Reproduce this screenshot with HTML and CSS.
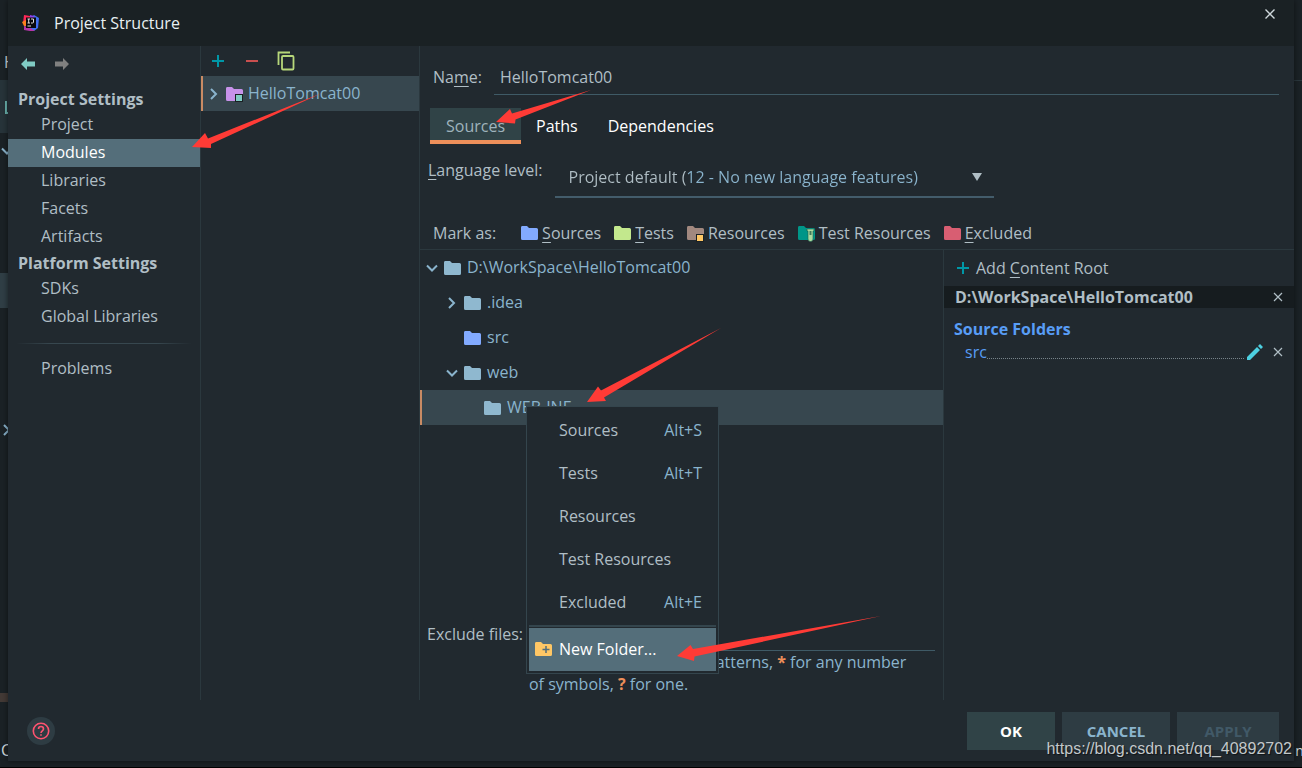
FILE: index.html
```html
<!DOCTYPE html>
<html lang="en">
<head>
<meta charset="utf-8">
<title>Project Structure</title>
<link rel="stylesheet" href="styles.css">
</head>
<body>
<svg class="defs" aria-hidden="true">
  <symbol id="folder" viewBox="0 0 18 16"><path d="M2 1h5l2 2h7.500q1.500 0 1.500 1.500v9q0 1.500-1.500 1.500h-14q-1.500 0-1.500-1.500v-11q0-1.500 1-1.500z" fill="currentColor"/></symbol>
  <symbol id="chev-right" viewBox="0 0 12 12"><path d="M3 1l5 5-5 5" fill="none" stroke="currentColor" stroke-width="2"/></symbol>
  <symbol id="chev-down" viewBox="0 0 12 12"><path d="M1 3.500l5 5 5-5" fill="none" stroke="currentColor" stroke-width="2"/></symbol>
  <symbol id="cross" viewBox="0 0 10 10"><path d="M1 1l8 8M9 1l-8 8" fill="none" stroke="currentColor" stroke-width="1.200"/></symbol>
  <symbol id="plus" viewBox="0 0 14 14"><path d="M7 1v12M1 7h12" fill="none" stroke="currentColor" stroke-width="2"/></symbol>
</svg>

<div class="backdrop" aria-hidden="true">
  <span class="peek peek-menu">H</span>
  <span class="peek peek-tab"></span>
  <span class="peek peek-mark"></span>
  <svg class="peek peek-chev-down" viewBox="0 0 12 12"><use href="#chev-down"/></svg>
  <span class="peek peek-row"></span>
  <svg class="peek peek-chev-right" viewBox="0 0 12 12"><use href="#chev-right"/></svg>
  <span class="peek peek-brown"></span>
  <span class="peek peek-status">C</span>
  <span class="peek peek-line"></span>
  <span class="peek peek-event">nic</span>
</div>

<div class="dialog" role="dialog" aria-labelledby="dialog-title">
  <header class="titlebar">
    <svg class="logo" viewBox="0 0 18 18" aria-hidden="true">
      <path d="M2 1l6 1 2 5-6 5-3-3z" fill="#fe2857"/>
      <path d="M0 8l4-2 1 6-3 0z" fill="#fc801d"/>
      <path d="M9 3l3-2 5 3-1 10-4 3-5-1z" fill="#3f6df0"/>
      <path d="M2 12l5 1 6 4-5 0-6-1z" fill="#b436a8"/>
      <path d="M8 1l4 1 1 4-5 0z" fill="#8f41e8"/>
      <path d="M4 3.500h10v10.500H4z" fill="#08080c"/>
      <path d="M5.500 5h2.500M6.700 5v4M5.500 9h2.500M9 5h2.500v3q0 1-1 1H9M5.500 12h3.500" fill="none" stroke="#ddd" stroke-width="1"/>
    </svg>
    <h1 id="dialog-title">Project Structure</h1>
    <button class="icon-btn close" aria-label="Close"><svg width="12" height="12" viewBox="0 0 12 12"><path d="M1.500 1.500l9 9M10.500 1.500l-9 9" fill="none" stroke="currentColor" stroke-width="1.400"/></svg></button>
  </header>

  <div class="body">
    <nav class="sidebar">
      <div class="history">
        <button class="icon-btn back" aria-label="Back"><svg width="14" height="12" viewBox="0 0 14 12"><path d="M0 6l6-6v3.500h8v5H6V12z" fill="currentColor"/></svg></button>
        <button class="icon-btn forward" aria-label="Forward"><svg width="14" height="12" viewBox="0 0 14 12"><path d="M14 6L8 0v3.500H0v5h8V12z" fill="currentColor"/></svg></button>
      </div>
      <h2>Project Settings</h2>
      <a href="#">Project</a>
      <a href="#" class="current" aria-current="page">Modules</a>
      <a href="#">Libraries</a>
      <a href="#">Facets</a>
      <a href="#">Artifacts</a>
      <h2>Platform Settings</h2>
      <a href="#">SDKs</a>
      <a href="#">Global Libraries</a>
      <hr>
      <a href="#">Problems</a>
    </nav>

    <section class="modules">
      <div class="toolbar">
        <button class="icon-btn add" aria-label="Add"><svg width="14" height="14"><use href="#plus"/></svg></button>
        <button class="icon-btn remove" aria-label="Remove"><svg width="14" height="14" viewBox="0 0 14 14"><path d="M1 7h12" stroke="currentColor" stroke-width="2"/></svg></button>
        <button class="icon-btn copy" aria-label="Copy"><svg width="18" height="20" viewBox="0 0 18 20"><path d="M1.500 14V1.500H13" fill="none" stroke="currentColor" stroke-width="1.800"/><rect x="5" y="5" width="11.500" height="13.500" rx="1" fill="none" stroke="currentColor" stroke-width="1.800"/></svg></button>
      </div>
      <div class="row selected module">
        <svg class="chev"><use href="#chev-right"/></svg>
        <svg class="folder violet" viewBox="0 0 18 16"><use href="#folder"/><rect x="10.500" y="8.500" width="7" height="7" fill="#80cbc4" stroke="#1a2023"/></svg>
        <span>HelloTomcat00</span>
      </div>
    </section>

    <main class="editor">
      <div class="name-row">
        <label for="name">Na<u>m</u>e:</label>
        <input id="name" type="text" value="HelloTomcat00">
      </div>
      <div class="tabs" role="tablist">
        <button role="tab" aria-selected="true">Sources</button>
        <button role="tab" aria-selected="false">Paths</button>
        <button role="tab" aria-selected="false">Dependencies</button>
      </div>
      <div class="level-row">
        <label for="level"><u>L</u>anguage level:</label>
        <div class="select-box">
          <select id="level"><option>Project default (12 - No new language features)</option></select>
          <svg width="12" height="10" viewBox="0 0 12 10" aria-hidden="true"><path d="M1 1h10L6 9z" fill="#b0bec5"/></svg>
        </div>
      </div>
      <div class="marks">
        <span class="marks-label">Mark as:</span>
        <button><svg class="folder blue"><use href="#folder"/></svg><span><u>S</u>ources</span></button>
        <button><svg class="folder green"><use href="#folder"/></svg><span><u>T</u>ests</span></button>
        <button><svg class="folder brown" viewBox="0 0 18 16"><use href="#folder"/><rect x="10.500" y="9.500" width="7" height="7" fill="#ffc765" stroke="#1a2023"/></svg><span>Resources</span></button>
        <button><svg class="folder teal" viewBox="0 0 18 16"><use href="#folder"/><path d="M10 4h7v2h-1v8q0 2.500-2.500 2.500T11 14V6h-1z" fill="#a9dca0" stroke="#19604f" stroke-width=".6"/><path d="M12.500 6h2v4h-2z" fill="#42795c"/></svg><span>Test Resources</span></button>
        <button><svg class="folder red"><use href="#folder"/></svg><span><u>E</u>xcluded</span></button>
      </div>

      <div class="split">
        <div class="left">
          <ul class="tree">
            <li class="row l1"><svg class="chev"><use href="#chev-down"/></svg><svg class="folder sky"><use href="#folder"/></svg><span>D:\WorkSpace\HelloTomcat00</span></li>
            <li class="row l2"><svg class="chev"><use href="#chev-right"/></svg><svg class="folder sky"><use href="#folder"/></svg><span>.idea</span></li>
            <li class="row l2"><span class="chev"></span><svg class="folder blue"><use href="#folder"/></svg><span>src</span></li>
            <li class="row l2"><svg class="chev"><use href="#chev-down"/></svg><svg class="folder sky"><use href="#folder"/></svg><span>web</span></li>
            <li class="row l3 selected"><span class="chev"></span><svg class="folder sky"><use href="#folder"/></svg><span>WEB-INF</span>
              <div class="menu" role="menu">
                <button role="menuitem"><span>Sources</span><kbd>Alt+S</kbd></button>
                <button role="menuitem"><span>Tests</span><kbd>Alt+T</kbd></button>
                <button role="menuitem"><span>Resources</span></button>
                <button role="menuitem"><span>Test Resources</span></button>
                <button role="menuitem"><span>Excluded</span><kbd>Alt+E</kbd></button>
                <hr>
                <button role="menuitem" class="active"><svg class="folder amber" viewBox="0 0 18 16"><use href="#folder"/><path d="M12 5v7M8.500 8.500h7" stroke="#546e7a" stroke-width="1.500"/></svg><span>New Folder...</span></button>
              </div>
            </li>
          </ul>
          <div class="exclude">
            <label for="exclude">Exclude files:</label>
            <input id="exclude" type="text">
            <p>Use <b>;</b> to separate name patterns, <b>*</b> for any number of symbols, <b>?</b> for one.</p>
          </div>
        </div>

        <aside class="roots">
          <button class="add-root"><svg width="14" height="14"><use href="#plus"/></svg><span>Add <u>C</u>ontent Root</span></button>
          <div class="root-head"><h3>D:\WorkSpace\HelloTomcat00</h3><button class="icon-btn" aria-label="Remove content root"><svg width="10" height="10"><use href="#cross"/></svg></button></div>
          <h4>Source Folders</h4>
          <div class="source">
            <a href="#">src</a><span class="leader"></span>
            <button class="icon-btn pencil" aria-label="Edit"><svg width="16" height="16" viewBox="0 0 16 16"><path d="M0 13L10 3l3 3L3 16H0zM11 2l2-2 3 3-2 2z" fill="currentColor"/></svg></button>
            <button class="icon-btn" aria-label="Remove source folder"><svg width="10" height="10"><use href="#cross"/></svg></button>
          </div>
        </aside>
      </div>
    </main>
  </div>

  <footer class="footer">
    <button class="help" aria-label="Help"><svg width="18" height="18" viewBox="0 0 18 18"><circle cx="9" cy="9" r="7.700" fill="none" stroke="currentColor" stroke-width="1.600"/><path d="M6.500 7q0-2.500 2.500-2.500T11.500 7q0 1-1.200 1.900T9 11" fill="none" stroke="currentColor" stroke-width="1.600"/><path d="M8.200 12.200h1.600v1.600H8.200z" fill="currentColor"/></svg></button>
    <button class="btn ok">OK</button>
    <button class="btn cancel">CANCEL</button>
    <button class="btn apply" disabled>APPLY</button>
  </footer>
</div>

<svg class="arrows" viewBox="0 0 1302 768" width="1302" height="768" aria-hidden="true">
  <path d="M192 147l13-14 3 5.500L322 93l-111 51v4z"/>
  <path d="M496 122l14-13 2 4.500L591 90l-75.500 29.500-.5 4z"/>
  <path d="M587 402l11-15.500 3 4L721 328 604 397.500l2 3.500z"/>
  <path d="M677 656l13.500-11 2.500 4L881 616l-186.500 40.500-.5 4.500z"/>
</svg>
<div class="watermark">https://blog.csdn.net/qq_40892702</div>
</body>
</html>
```

FILE: styles.css
```css
:root {
  --bg: #21292f;
  --bar: #1a2124;
  --line: #2b383e;
  --text: #b0bec5;
  --sky: #8ab4cd;
  --row: #37474f;
  --strong: #546e7a;
  --orange: #ee8f5a;
}

* { box-sizing: border-box; }

body {
  position: relative;
  margin: 0;
  min-height: 100vh;
  padding: 0 8px 6px;
  display: flex;
  overflow: hidden;
  background: #1b2226;
  border-bottom: 1px solid #000;
  color: var(--text);
  font: 16px/22px "Open Sans", "Noto Sans", sans-serif;
}

h1, h2, h3, h4, p, ul { margin: 0; padding: 0; }
ul { list-style: none; }
button, input, select { font: inherit; color: inherit; background: none; border: 0; margin: 0; padding: 0; }
input, select { outline: 0; }
a { color: inherit; text-decoration: none; }
svg { display: block; flex: none; }
u { text-underline-offset: 3px; text-decoration-thickness: 1px; }
.defs { position: absolute; width: 0; height: 0; }
.icon-btn { display: flex; color: var(--text); }

/* Main window showing round the dialog */
.backdrop { position: absolute; inset: 0; overflow: hidden; }
.peek { position: absolute; color: #cfd8dc; }
.peek-menu { left: 4px; top: 51px; }
.peek-tab { left: 0; top: 80px; width: 8px; height: 53px; background: #27343a; }
.peek-mark { left: 5px; top: 101px; width: 6px; height: 13px; border: solid #6bb5b0; border-width: 0 0 2px 2px; }
.peek-chev-down { left: 1px; top: 145px; width: 12px; height: 12px; color: var(--sky); }
.peek-row { left: 0; top: 273px; width: 8px; height: 35px; background: #303f46; }
.peek-chev-right { left: 1px; top: 424px; width: 12px; height: 12px; color: var(--sky); }
.peek-brown { left: 0; top: 693px; width: 8px; height: 9px; background: #433a36; }
.peek-status { left: 1px; top: 739px; }
.peek-line { right: 0; top: 80px; width: 8px; height: 1px; background: var(--line); }
.peek-event { right: -12px; top: 740px; font-size: 14px; }

.dialog {
  position: relative;
  flex: 1;
  display: flex;
  flex-direction: column;
  background: var(--bg);
  box-shadow: 0 0 6px #0008;
}

.titlebar { display: flex; align-items: center; height: 46px; padding: 0 18px 0 14px; background: var(--bar); }
.logo { width: 18px; height: 18px; }
.titlebar h1 { flex: 1; margin-left: 14px; font-size: 16px; font-weight: 400; color: #e8f0f2; }
.close { align-self: flex-start; margin-top: 8px; color: #cfd8dc; }

.body { flex: 1; display: grid; grid-template-columns: 192px 220px 1fr; }

.sidebar { display: flex; flex-direction: column; }
.history { display: flex; align-items: center; gap: 20px; height: 41px; padding: 0 0 6px 13px; }
.back { color: #80cbc4; }
.forward { color: #808080; }
.sidebar h2 { padding-left: 10px; font-size: 16px; line-height: 24px; font-weight: 700; }
.sidebar a { padding: 0 0 2px 33px; line-height: 26px; }
.sidebar .current { background: var(--strong); color: #fff; }
.sidebar hr { width: 176px; height: 1px; margin: 12px auto 11px; border: 0; background: linear-gradient(90deg, transparent, #37474f 20%, #37474f 80%, transparent); }

.modules { border: solid var(--line); border-width: 0 1px; }
.toolbar { display: flex; align-items: center; gap: 20px; height: 30px; padding-left: 10px; }
.add { color: #0097a7; }
.remove { color: #c94f4f; }
.copy { margin-left: -2px; color: #b7d77a; }

.row { display: flex; align-items: center; height: 35px; border-left: 2px solid transparent; color: var(--sky); white-space: nowrap; }
.row > span { padding-bottom: 2px; }
.row.selected { background: var(--row); border-left-color: #c98b64; }
.chev { flex: none; width: 12px; height: 12px; margin-right: 5px; }
.folder { width: 18px; height: 16px; margin-right: 5px; overflow: visible; }
.module { padding-left: 5px; }
.violet { color: #c792ea; }
.blue { color: #82aaff; }
.green { color: #c3e88d; }
.brown { color: #a1887f; }
.teal { color: #009688; }
.red { color: #d85e72; }
.sky { color: #8fb8cf; }
.amber { color: #ffc765; }

.editor { display: flex; flex-direction: column; min-width: 0; }
.name-row { display: flex; align-items: center; gap: 12px; height: 49px; padding: 14px 15px 0 13px; }
.name-row label { padding-bottom: 2px; }
.name-row input { flex: 1; height: 35px; padding-left: 6px; border-bottom: 1px solid #3f5a66; }

.tabs { display: flex; margin: 13px 0 0 10px; }
.tabs button { height: 36px; padding: 4px 16px 0; border-bottom: 4px solid transparent; color: #fff; }
.tabs button + button { padding: 4px 15px 0; }
.tabs button[aria-selected="true"] { background: #304347; border-color: var(--orange); color: #9fb3bc; }

.level-row { display: flex; gap: 12px; padding: 15px 0 0 8px; }
.select-box { display: flex; align-items: center; justify-content: space-between; width: 439px; height: 39px; padding: 0 11px 2px 14px; border-bottom: 2px solid #435c6b; }
.select-box select {
  flex: 1;
  appearance: none;
  background: linear-gradient(90deg, var(--text) 118px, var(--sky) 118px);
  background-clip: text;
  color: transparent;
}

.marks { display: flex; align-items: center; gap: 12px; padding: 24px 8px 5px 13px; border-bottom: 1px solid var(--line); white-space: nowrap; }
.marks-label { margin-right: 12px; }
.marks button { display: flex; align-items: center; }
.marks .folder { margin-right: 4px; }

.split { flex: 1; display: grid; grid-template-columns: 1fr 351px; }
.left { display: flex; flex-direction: column; justify-content: space-between; min-width: 0; }
.tree .folder { margin-right: 6px; }
.tree .l1 { padding-left: 4px; }
.tree .l2 { padding-left: 24px; }
.tree .l3 { padding-left: 44px; position: relative; }

.menu {
  position: absolute;
  z-index: 2;
  left: 104px;
  top: 16px;
  width: 193px;
  padding: 2px;
  display: flex;
  flex-direction: column;
  background: var(--bg);
  border: 1px solid #34454d;
  color: var(--text);
}
.menu button { display: flex; align-items: center; justify-content: space-between; height: 43px; padding: 0 14px 2px 30px; }
.menu kbd { font: inherit; color: var(--sky); }
.menu hr { width: 100%; height: 2px; margin: 1px 0; border: 0; background: #34454d; }
.menu .active { justify-content: flex-start; padding-left: 5px; background: var(--strong); color: #fff; }
.menu .active .folder { margin-right: 7px; }

.exclude { display: grid; grid-template-columns: auto 1fr; column-gap: 6px; align-items: center; padding: 0 8px 5px 7px; }
.exclude label { padding-bottom: 2px; }
.exclude input { height: 33px; width: 100%; border-bottom: 1px solid #3f5a66; }
.exclude p { grid-column: 2; padding-right: 16px; color: var(--sky); }
.exclude b { color: var(--orange); }

.roots { border-left: 1px solid var(--line); }
.add-root { display: flex; align-items: center; gap: 6px; height: 36px; padding-left: 12px; }
.add-root svg { color: #0097a7; }
.root-head { display: flex; align-items: center; justify-content: space-between; padding: 0 11px; background: #161c1f; }
.roots h3, .roots h4 { font-size: 16px; font-weight: 700; }
.roots h4 { padding: 10px 10px 0; color: #589df6; }
.source { display: flex; align-items: center; padding: 1px 11px 0 21px; color: #589df6; }
.leader { flex: 1; height: 14px; border-bottom: 1px dotted #77838a; margin-right: 3px; }
.pencil { margin-right: 10px; color: #4dd0e1; }

.footer { display: flex; align-items: center; gap: 7px; height: 61px; padding: 0 15px 0 19px; }
.help { display: grid; place-items: center; width: 28px; height: 28px; margin-right: auto; border-radius: 50%; background: #2e3c43; color: #ff5370; }
.btn { height: 38px; font-size: 15px; font-weight: 700; }
.ok { width: 88px; background: #304347; color: #fff; }
.cancel { width: 108px; background: #2e3c43; color: var(--sky); }
.apply { width: 102px; background: #2e3c43; color: #415967; }

/* Annotations drawn over the window */
.arrows { position: absolute; left: 0; top: 0; z-index: 3; fill: #ff3b36; pointer-events: none; }
.watermark { position: absolute; z-index: 4; right: 10px; bottom: 7px; color: #c3c8ca; font: 16px/22px "Liberation Sans", Arial, sans-serif; text-shadow: 1px 1px 1px #0008; pointer-events: none; }
```
